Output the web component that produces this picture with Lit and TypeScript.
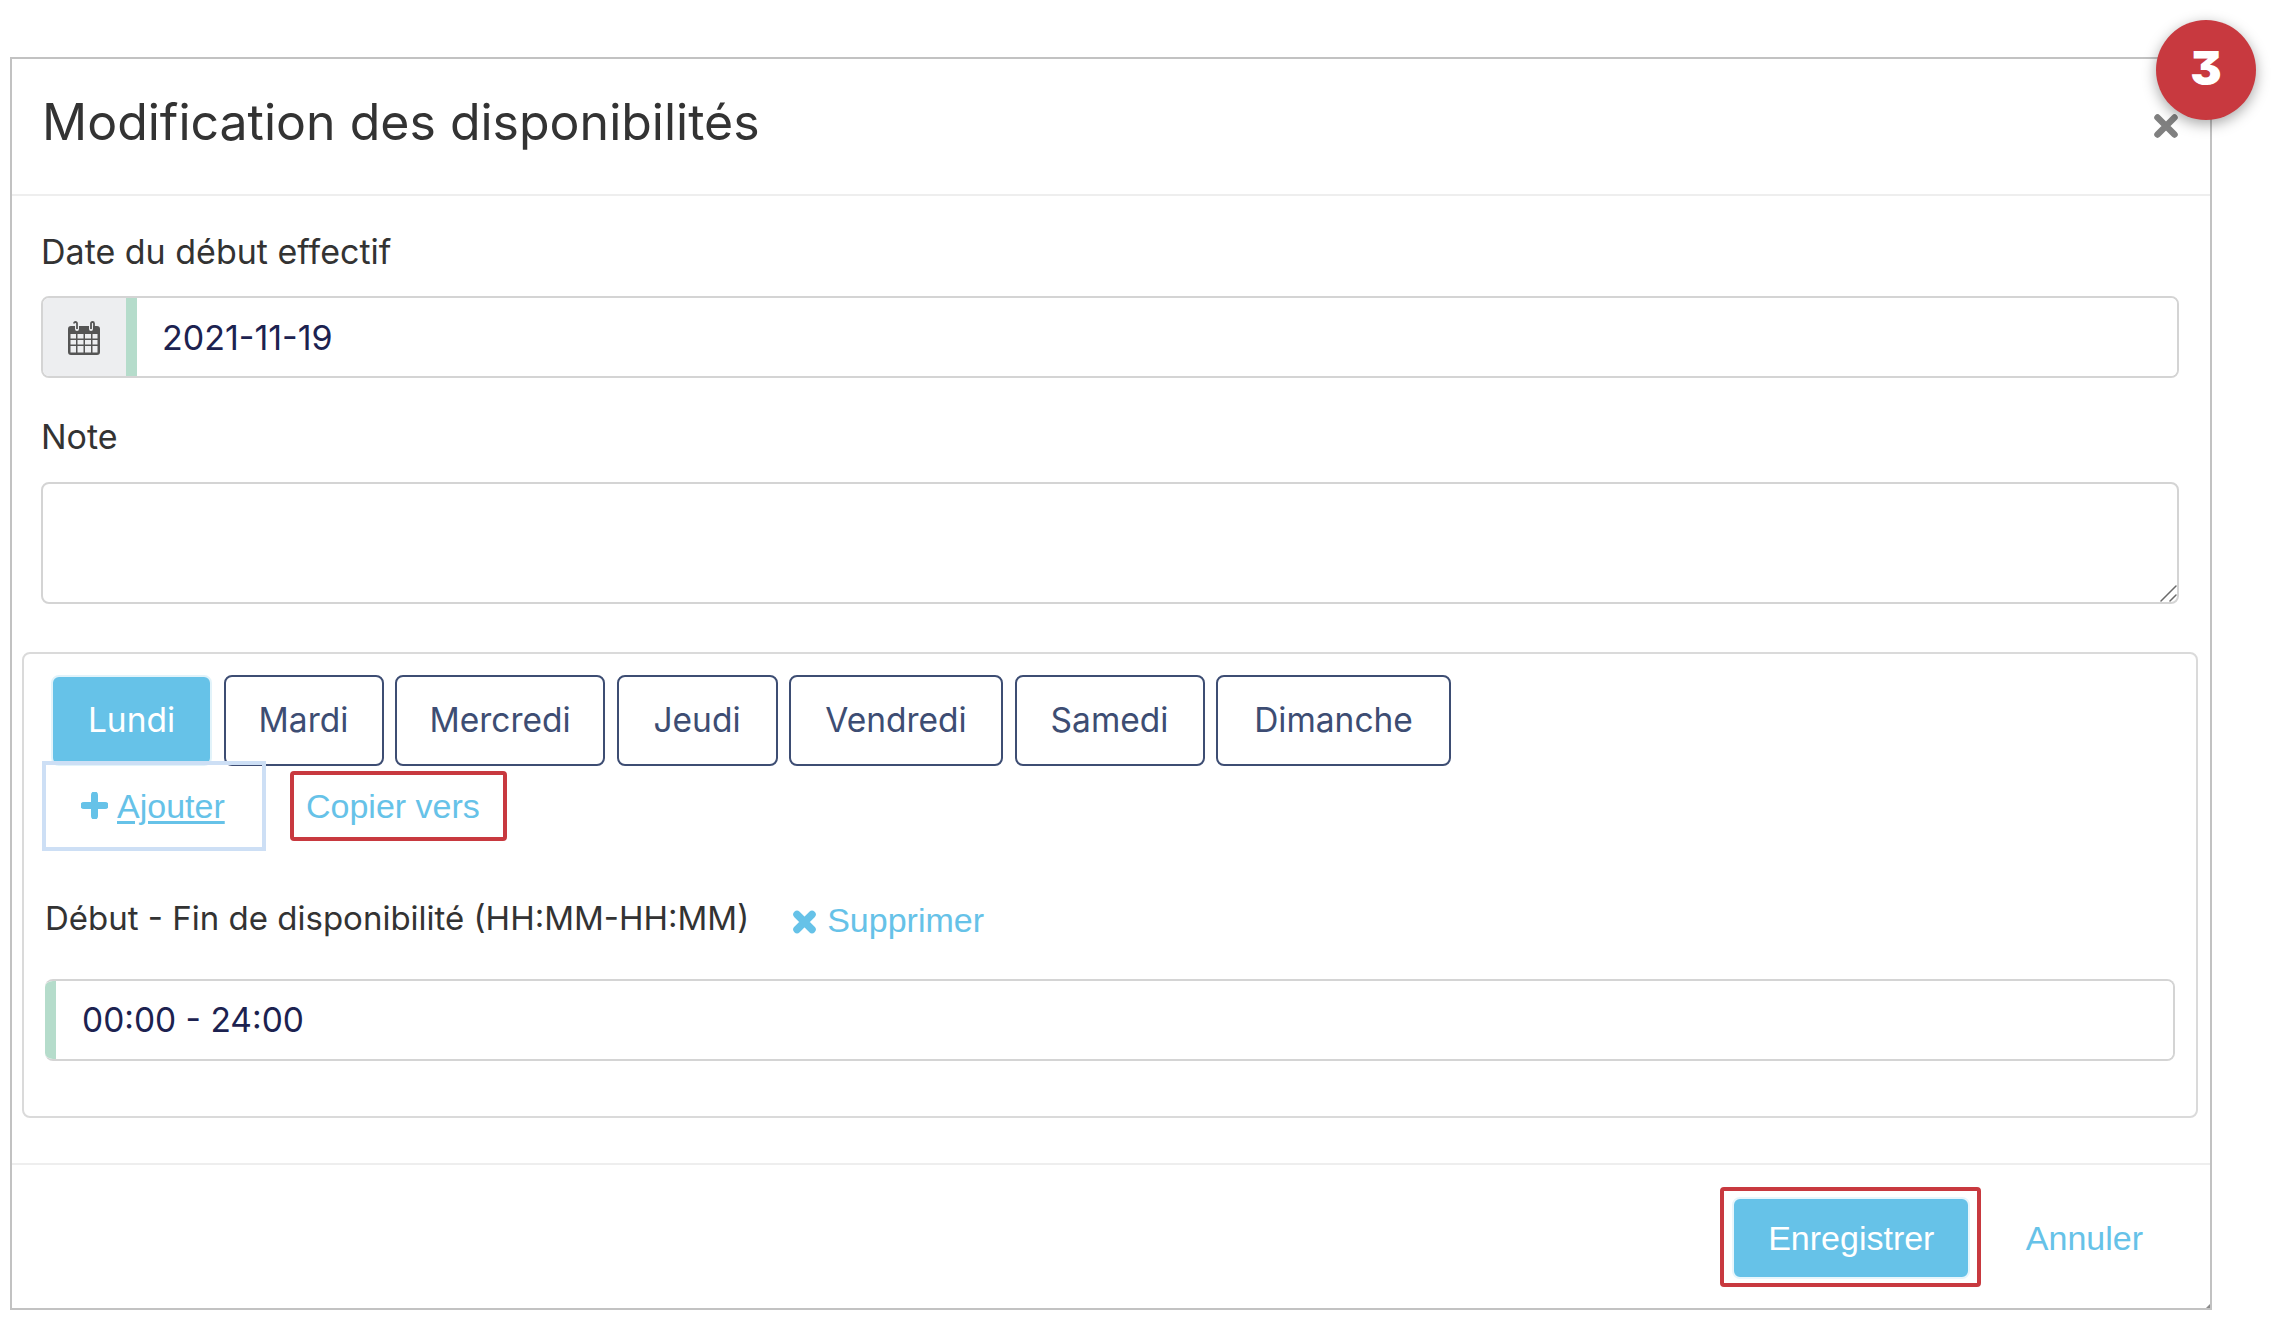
import { LitElement, html, css } from "lit";
import { customElement } from "lit/decorators.js";

const DAYS: [string, number][] = [
  ["Lundi", 161],
  ["Mardi", 160],
  ["Mercredi", 210],
  ["Jeudi", 161],
  ["Vendredi", 214],
  ["Samedi", 190],
  ["Dimanche", 235],
];

@customElement("app-root")
export class AppRoot extends LitElement {
  static styles = css`
    :host { display: block; font-family: Inter, "Liberation Sans", sans-serif; color: #333; }
    * { box-sizing: border-box; }
    .page { padding: 57px 0 14px 10px; width: 2280px; height: 1324px; position: relative; background: #fff; }
    .modal { width: 2202px; height: 1253px; border: 2px solid #c2c2c2; display: flex; flex-direction: column; background: #fff; position: relative; }
    .modal::after { content: ""; position: absolute; right: 0; bottom: 0; border-style: solid; border-width: 0 0 4px 4px; border-color: transparent transparent #8a8a8a transparent; }
    .header { height: 137px; flex: none; border-bottom: 2px solid #eeeeee; display: flex; justify-content: space-between; align-items: center; padding: 0 32px 0 30px; }
    .title { font-size: 50px; font-weight: 400; margin: 0 0 9px; color: #333; line-height: 60px; }
    .close { width: 24px; height: 24px; display: block; margin-bottom: 2px; }
    .body { padding: 36px 12px 0 10px; flex: 1; }
    .field { margin: 0 19px; }
    .label { font-size: 34px; line-height: 40px; color: #333; display: block; }
    .group { display: flex; height: 82px; margin-top: 24px; border: 2px solid #d4d4d4; border-radius: 8px; overflow: hidden; }
    .prepend { width: 94px; background: #edeef0; display: flex; align-items: center; justify-content: center; flex: none; border-right: 11px solid #b5dccb; padding-top: 2px; padding-right: 2px; }
    .prepend svg { width: 32px; height: 34px; display: block; }
    .group input { flex: 1; min-width: 0; border: none; outline: none; font: 400 34px Inter, sans-serif; color: #1c2250; padding: 0 0 0 25px; background: #fff; }
    .note { margin-top: 39px; }
    .area { position: relative; margin-top: 25px; }
    textarea { display: block; width: 100%; height: 122px; border: 2px solid #d4d4d4; border-radius: 8px; outline: none; background: #fff; resize: none; }
    .grip { position: absolute; right: 2px; bottom: 2px; width: 18px; height: 18px; display: block; pointer-events: none; }
    .panel { margin-top: 48px; border: 2px solid #dadada; border-radius: 8px; height: 466px; padding: 21px 21px 0 21px; }
    .tabs { display: flex; gap: 11.5px; margin-left: 6px; }
    .tab { height: 91px; border: 2px solid #3d4d73; border-radius: 8px; background: #fff; color: #3d4d73; font: 400 33.5px Inter, sans-serif; padding: 0 0 2px; }
    .tab.on { background: #66c2e8; color: #fff; border-color: #e2f3fa; }
    .actions { display: flex; align-items: center; gap: 24px; margin: -5px 0 0 -3px; position: relative; }
    .link { font: 400 34px "Liberation Sans", Arial, sans-serif; color: #66c2e8; text-decoration: none; }
    .add { width: 224px; height: 90px; border: 4px solid #cddff5; display: flex; align-items: center; padding-left: 35px; gap: 9px; }
    .add svg { width: 27px; height: 27px; display: block; margin-bottom: 2px; }
    .add .link { text-decoration: underline; text-underline-offset: 3px; }
    .copy { width: 217px; height: 70px; border: 4px solid #c8393f; border-radius: 4px; display: flex; align-items: center; padding-left: 12px; }
    .range { display: flex; align-items: center; margin-top: 47px; height: 40px; }
    .range .label { font-size: 33px; }
    .remove { display: flex; align-items: center; gap: 10px; margin-left: 43px; margin-top: 5px; }
    .remove svg { width: 25px; height: 24px; display: block; margin-top: 2px; }
    .time { margin-top: 41px; border-left: none; }
    .time input { border-left: 11px solid #b5dccb; padding-left: 26px; font-size: 33.500px; }
    .footer { height: 145px; flex: none; border-top: 2px solid #eeeeee; display: flex; align-items: center; justify-content: flex-end; padding: 0 67px 0 0; }
    .save-box { width: 261px; height: 100px; border: 4px solid #c8393f; border-radius: 4px; display: flex; align-items: center; justify-content: center; padding: 3px 0 0 2px; }
    .save { width: 238px; height: 82px; background: #66c2e8; border: 2px solid #e8f6fc; border-radius: 8px; color: #fff; font: 400 34px "Liberation Sans", Arial, sans-serif; padding: 0; }
    .cancel { margin: 3px 0 0 45px; }
    .badge { position: absolute; left: 2156px; top: 20px; width: 100px; height: 100px; border-radius: 50%; background: #c8393f; box-shadow: 0 4px 14px rgba(0,0,0,.35); color: #fff; display: flex; align-items: center; justify-content: center; font: 900 47px Inter, sans-serif; font-feature-settings: "cv09"; padding-bottom: 5px; }
  `;

  render() {
    return html`
      <div class="page">
        <div class="modal">
          <div class="header">
            <h1 class="title">Modification des disponibilités</h1>
            <svg class="close" viewBox="0 0 24 24"><path d="M3.500 3.500 L20.500 20.500 M20.500 3.500 L3.500 20.500" stroke="#808080" stroke-width="6.500" stroke-linecap="round" fill="none"/></svg>
          </div>
          <div class="body">
            <div class="field">
              <label class="label">Date du début effectif</label>
              <div class="group">
                <div class="prepend">
                  <svg viewBox="0 0 32 34">
                    <path fill-rule="evenodd" fill="#555" d="M3 5h4v3a2 2 0 0 0 4 0V5h10v3a2 2 0 0 0 4 0V5h4a3 3 0 0 1 3 3v23a3 3 0 0 1-3 3H3a3 3 0 0 1-3-3V8a3 3 0 0 1 3-3zM2.500 13v4.500h5.500V13zM9.500 13v4.500h6V13zM17 13v4.500h6V13zM24.500 13v4.500h5V13zM2.500 19v4.500h5.500V19zM9.500 19v4.500h6V19zM17 19v4.500h6V19zM24.500 19v4.500h5V19zM2.500 25v6.500h5.500V25zM9.500 25v6.500h6V25zM17 25v6.500h6V25zM24.500 25v6.500h5V25z"/>
                    <path fill="none" stroke="#555" stroke-width="1.800" d="M9 8V2.500a1.500 1.500 0 0 0-3 0M9 8V2.500M23 8V2.500a1.500 1.500 0 0 1 3 0V8M23 2.500V8"/>
                  </svg>
                </div>
                <input value="2021-11-19" />
              </div>
              <label class="label note">Note</label>
              <div class="area">
                <textarea></textarea>
                <svg class="grip" viewBox="0 0 18 18"><path d="M2 17 L17 2 M11 17 L17 11" stroke="#6a6a6a" stroke-width="1.500" stroke-linecap="round" fill="none"/></svg>
              </div>
            </div>
            <div class="panel">
              <div class="tabs">
                ${DAYS.map(([d, w], i) => html`<button class="tab ${i === 0 ? "on" : ""}" style="width:${w}px">${d}</button>`)}
              </div>
              <div class="actions">
                <div class="add">
                  <svg viewBox="0 0 27 27"><path d="M13.500 3 V24 M3 13.500 H24" stroke="#66c2e8" stroke-width="7" stroke-linecap="round" fill="none"/></svg>
                  <a class="link" href="#">Ajouter</a>
                </div>
                <div class="copy"><span class="link">Copier vers</span></div>
              </div>
              <div class="range">
                <span class="label">Début - Fin de disponibilité (HH:MM-HH:MM)</span>
                <div class="remove">
                  <svg viewBox="0 0 25 24"><path d="M5 4.500 L20 19.500 M20 4.500 L5 19.500" stroke="#66c2e8" stroke-width="7.500" stroke-linecap="round" fill="none"/></svg>
                  <span class="link">Supprimer</span>
                </div>
              </div>
              <div class="group time"><input value="00:00 - 24:00" /></div>
            </div>
          </div>
          <div class="footer">
            <div class="save-box"><button class="save">Enregistrer</button></div>
            <span class="link cancel">Annuler</span>
          </div>
        </div>
        <div class="badge">3</div>
      </div>
    `;
  }
}
